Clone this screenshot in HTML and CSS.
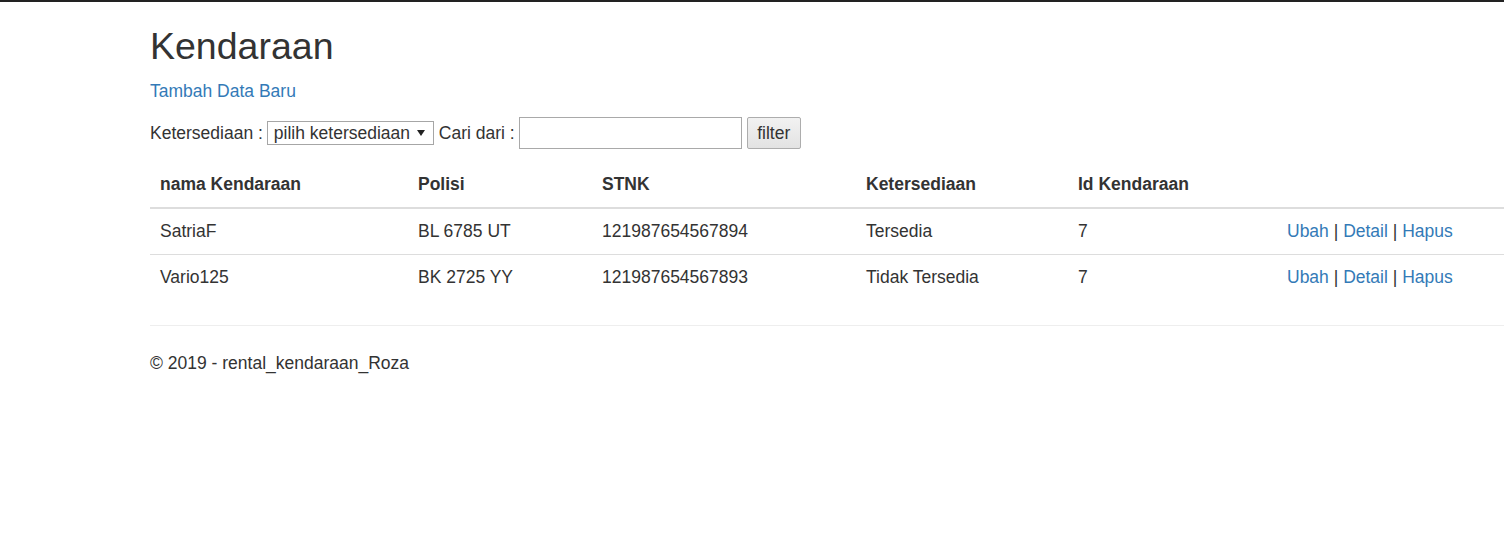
FILE: index.html
```html
<!DOCTYPE html>
<html>
<head>
<meta charset="utf-8">
<title>Kendaraan</title>
<link rel="stylesheet" href="styles.css">
</head>
<body>
<div class="topbar"></div>
<div class="container">
  <h2 class="title">Kendaraan</h2>
  <p class="create"><a href="#">Tambah Data Baru</a></p>
  <form class="filter-form">
    <label class="lbl">Ketersediaan :</label>
    <select class="sel"><option>pilih ketersediaan</option></select>
    <label class="lbl">Cari dari :</label>
    <input class="search" type="text">
    <button class="btn" type="button">filter</button>
  </form>
  <table class="table">
    <colgroup>
      <col class="c1"><col class="c2"><col class="c3"><col class="c4"><col class="c5"><col>
    </colgroup>
    <thead>
      <tr>
        <th>nama Kendaraan</th>
        <th>Polisi</th>
        <th>STNK</th>
        <th>Ketersediaan</th>
        <th>Id Kendaraan</th>
        <th></th>
      </tr>
    </thead>
    <tbody>
      <tr>
        <td>SatriaF</td>
        <td>BL 6785 UT</td>
        <td>121987654567894</td>
        <td>Tersedia</td>
        <td>7</td>
        <td><a href="#">Ubah</a> | <a href="#">Detail</a> | <a href="#">Hapus</a></td>
      </tr>
      <tr>
        <td>Vario125</td>
        <td>BK 2725 YY</td>
        <td>121987654567893</td>
        <td>Tidak Tersedia</td>
        <td>7</td>
        <td><a href="#">Ubah</a> | <a href="#">Detail</a> | <a href="#">Hapus</a></td>
      </tr>
    </tbody>
  </table>
  <hr class="sep">
  <footer class="footer"><p>&copy; 2019 - rental_kendaraan_Roza</p></footer>
</div>
</body>
</html>
```

FILE: styles.css
```css
html, body {
  margin: 0;
  padding: 0;
  background: #fff;
  overflow: hidden;
}
body {
  font-family: "Liberation Sans", Arial, sans-serif;
  font-size: 17.5px;
  line-height: 25px;
  color: #333;
}
.topbar {
  height: 2px;
  background: #222;
}
.container {
  margin-left: 150px;
  width: 1425px;
}
.title {
  font-size: 37.5px;
  font-weight: 500;
  line-height: 41px;
  margin: 24px 0 12px;
}
.create {
  margin: 0 0 13px;
}
a {
  color: #337ab7;
  text-decoration: none;
}
.filter-form {
  display: flex;
  align-items: center;
  height: 32px;
  margin: 0 0 13px;
}
.lbl {
  font-size: 17.5px;
}
.sel {
  appearance: none;
  -webkit-appearance: none;
  height: 24px;
  width: 167px;
  margin: 0 5px 0 4px;
  padding: 0 0 0 6px;
  border: 1px solid #a6a6a6;
  border-radius: 0;
  background: #fff url("data:image/svg+xml,%3Csvg xmlns='http://www.w3.org/2000/svg' width='8' height='6'%3E%3Cpath d='M0 0h8L4 6z' fill='%23222'/%3E%3C/svg%3E") no-repeat right 8px center;
  font-family: "Liberation Sans", Arial, sans-serif;
  font-size: 17.5px;
  color: #333;
}
.search {
  box-sizing: border-box;
  width: 223px;
  height: 32px;
  margin: 0 5px 0 4px;
  border: 1px solid #a9a9a9;
  padding: 2px 4px;
  font-family: "Liberation Sans", Arial, sans-serif;
  font-size: 17.5px;
}
.btn {
  box-sizing: border-box;
  height: 32px;
  width: 54px;
  padding: 0;
  border: 1px solid #adadad;
  border-radius: 2px;
  background: linear-gradient(#f2f2f2, #e3e3e3);
  font-family: "Liberation Sans", Arial, sans-serif;
  font-size: 17.5px;
  color: #333;
}
.table {
  width: 100%;
  border-collapse: collapse;
  border-spacing: 0;
  margin-bottom: 25px;
}
.c1 { width: 258px; }
.c2 { width: 184px; }
.c3 { width: 264px; }
.c4 { width: 212px; }
.c5 { width: 209px; }
.table th,
.table td {
  padding: 10px;
  text-align: left;
  vertical-align: top;
  line-height: 25px;
}
.table th {
  font-weight: bold;
  border-bottom: 2px solid #ddd;
  vertical-align: bottom;
}
.table td {
  border-top: 1px solid #ddd;
}
.sep {
  margin: 25px 0;
  border: 0;
  border-top: 1px solid #eee;
}
.footer p {
  margin: 0 0 12px;
}
```
